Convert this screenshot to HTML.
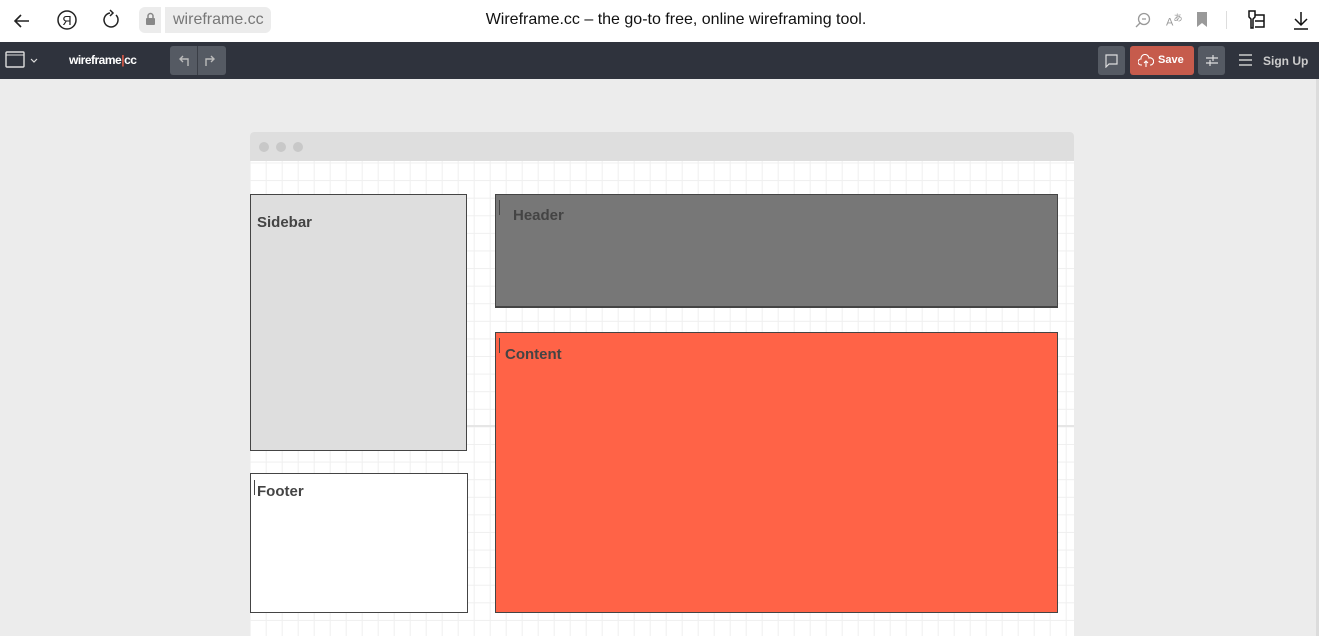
<!DOCTYPE html>
<html><head><meta charset="utf-8"><style>
*{margin:0;padding:0;box-sizing:border-box}
html,body{width:1319px;height:636px;overflow:hidden}
body{background:#ececec;font-family:"Liberation Sans",sans-serif;position:relative}
.abs{position:absolute}
#bar{left:0;top:0;width:1319px;height:42px;background:#fff}
#tb{left:0;top:42px;width:1319px;height:37px;background:#2f333d}
.btn{position:absolute;background:#555a63;border-radius:3px}
#frame{left:250px;top:132px;width:824px;height:504px;background:#fff;border-radius:4px 4px 0 0;overflow:hidden}
#title{left:0;top:0;width:824px;height:29px;background:#dedede}
.dot{position:absolute;top:10px;width:10px;height:10px;border-radius:50%;background:#c8c8c8}
#grid{left:0;top:29px;width:824px;height:480px;
background-image:
linear-gradient(#e6e6e6,#e6e6e6),
linear-gradient(to right,#efefef 1px,transparent 1px),
linear-gradient(to bottom,#efefef 1px,transparent 1px);
background-size:824px 2px,16px 17.6px,16px 17.6px;
background-position:0 264px,15.7px 0,0 1.5px;
background-repeat:repeat-x,repeat,repeat}
.box{position:absolute;border:1px solid #444;font-weight:bold;font-size:15px;color:#444}
.cur{position:absolute;width:1px;height:15px;background:#444}
</style></head><body>
<div id="bar" class="abs">
<svg class="abs" style="left:12px;top:11px" width="20" height="20" viewBox="0 0 20 20"><path d="M17 10H3M9 4L3 10l6 6" stroke="#222" stroke-width="1.6" fill="none"/></svg>
<svg class="abs" style="left:56px;top:9px" width="22" height="22" viewBox="0 0 22 22"><circle cx="11" cy="11" r="9" stroke="#222" stroke-width="1.5" fill="none"/><text x="11" y="16" font-size="13" text-anchor="middle" font-family="Liberation Sans" fill="#222">Я</text></svg>
<svg class="abs" style="left:101px;top:9px" width="20" height="22" viewBox="0 0 20 22"><path d="M15 6a7 7 0 1 1-6-2M9 1l3 3-3 3" stroke="#222" stroke-width="1.5" fill="none"/></svg>
<div class="abs" style="left:139px;top:7px;width:22px;height:26px;background:#ececec;border-radius:6px 0 0 6px"></div>
<svg class="abs" style="left:145px;top:12px" width="11" height="14" viewBox="0 0 11 14"><rect x="1" y="6" width="9" height="7" rx="1" fill="#888"/><path d="M3 6V4a2.5 2.5 0 0 1 5 0v2" stroke="#888" stroke-width="1.5" fill="none"/></svg>
<div class="abs" style="left:165px;top:7px;width:106px;height:26px;background:#ececec;border-radius:0 6px 6px 0;font-size:16px;color:#777;padding:4px 0 0 8px">wireframe.cc</div>
<div class="abs" style="left:476px;width:400px;top:11px;text-align:center;color:#111;font-size:16px;white-space:nowrap">Wireframe.cc – the go-to free, online wireframing tool.</div>
<svg class="abs" style="left:1134px;top:11px" width="18" height="18" viewBox="0 0 18 18"><circle cx="10" cy="8" r="5.5" stroke="#999" stroke-width="1.3" fill="none"/><path d="M6 12l-4 4M8 8h4" stroke="#999" stroke-width="1.3"/></svg>
<div class="abs" style="left:1166px;top:10px;font-size:11px;color:#999">A<sup>あ</sup></div>
<svg class="abs" style="left:1196px;top:11px" width="12" height="17" viewBox="0 0 12 17"><path d="M1 1h10v15l-5-4-5 4z" fill="#999"/></svg>
<div class="abs" style="left:1226px;top:11px;width:1px;height:18px;background:#ddd"></div>
<svg class="abs" style="left:1246px;top:9px" width="22" height="22" viewBox="0 0 22 22"><path d="M3 2h6v6l-2 2v9H5v-9L3 8z M9 6h9v12H9" stroke="#111" stroke-width="1.5" fill="none"/><path d="M9 12h9" stroke="#111" stroke-width="1.5"/></svg>
<svg class="abs" style="left:1292px;top:10px" width="18" height="20" viewBox="0 0 18 20"><path d="M9 2v13M3 9l6 6 6-6M2 19h14" stroke="#111" stroke-width="1.5" fill="none"/></svg>
</div>
<div id="tb" class="abs">
<svg class="abs" style="left:5px;top:8px" width="36" height="20" viewBox="0 0 36 20"><rect x="1" y="2" width="18" height="15" rx="1" stroke="#ddd" stroke-width="1.4" fill="none"/><path d="M1 5h18" stroke="#ddd"/><path d="M26 9l3 3 3-3" stroke="#ddd" stroke-width="1.2" fill="none"/></svg>
<div class="abs" style="left:69px;top:11px;font-size:12px;font-weight:bold;color:#fff;letter-spacing:-0.5px">wireframe<span style="color:#e05a47">|</span>cc</div>
<div class="btn" style="left:170px;top:4px;width:56px;height:29px"></div>
<div class="abs" style="left:197px;top:4px;width:1px;height:29px;background:#3a3e46"></div>
<svg class="abs" style="left:176px;top:10px" width="16" height="16" viewBox="0 0 16 16"><path d="M12 14V7H4M7 4L4 7l3 3" stroke="#bbb" stroke-width="1.4" fill="none"/></svg>
<svg class="abs" style="left:202px;top:10px" width="16" height="16" viewBox="0 0 16 16"><path d="M4 14V7h8M9 4l3 3-3 3" stroke="#bbb" stroke-width="1.4" fill="none"/></svg>
<div class="btn" style="left:1098px;top:4px;width:27px;height:29px"></div>
<svg class="abs" style="left:1104px;top:11px" width="15" height="15" viewBox="0 0 15 15"><path d="M2 2h11v9H5l-3 3z" stroke="#ddd" stroke-width="1.2" fill="none"/></svg>
<div class="btn" style="left:1130px;top:4px;width:64px;height:29px;background:#c65b4c"></div>
<svg class="abs" style="left:1138px;top:12px" width="16" height="14" viewBox="0 0 16 14"><path d="M4 11H3a3 3 0 0 1 0-6 4 4 0 0 1 8-1 3 3 0 0 1 2 7h-1M8 13V7M6 9l2-2 2 2" stroke="#fff" stroke-width="1.1" fill="none"/></svg>
<div class="abs" style="left:1158px;top:12px;font-size:11px;font-weight:bold;color:#fff">Save</div>
<div class="btn" style="left:1198px;top:4px;width:27px;height:29px"></div>
<svg class="abs" style="left:1205px;top:11px" width="14" height="15" viewBox="0 0 14 15"><path d="M1 5h12M1 10h12M8 2v6M5 7v6" stroke="#ddd" stroke-width="1.2"/></svg>
<svg class="abs" style="left:1239px;top:12px" width="14" height="12" viewBox="0 0 14 12"><path d="M0 1h13M0 6h13M0 11h13" stroke="#ccc" stroke-width="1.4"/></svg>
<div class="abs" style="left:1263px;top:12px;font-size:12px;font-weight:bold;color:#ccc">Sign Up</div>
</div>
<div class="abs" style="left:1316px;top:79px;width:3px;height:557px;background:#dcdcdc"></div>
<div id="frame" class="abs">
<div id="title" class="abs"><div class="dot" style="left:9px"></div><div class="dot" style="left:26px"></div><div class="dot" style="left:43px"></div></div>
<div id="grid" class="abs"></div>
</div>
<div class="box" style="left:250px;top:194px;width:217px;height:257px;background:#dedede;padding:19px 0 0 6px">Sidebar</div>
<div class="box" style="left:250px;top:473px;width:218px;height:140px;background:#fff;padding:9px 0 0 6px">Footer</div>
<div class="cur" style="left:254px;top:480px"></div>
<div class="box" style="left:495px;top:194px;width:563px;height:114px;background:#777;padding:12px 0 0 17px;border-bottom-width:2px">Header</div>
<div class="cur" style="left:499px;top:200px"></div>
<div class="box" style="left:495px;top:332px;width:563px;height:281px;background:#ff6347;padding:13px 0 0 9px">Content</div>
<div class="cur" style="left:499px;top:338px"></div>
</body></html>
